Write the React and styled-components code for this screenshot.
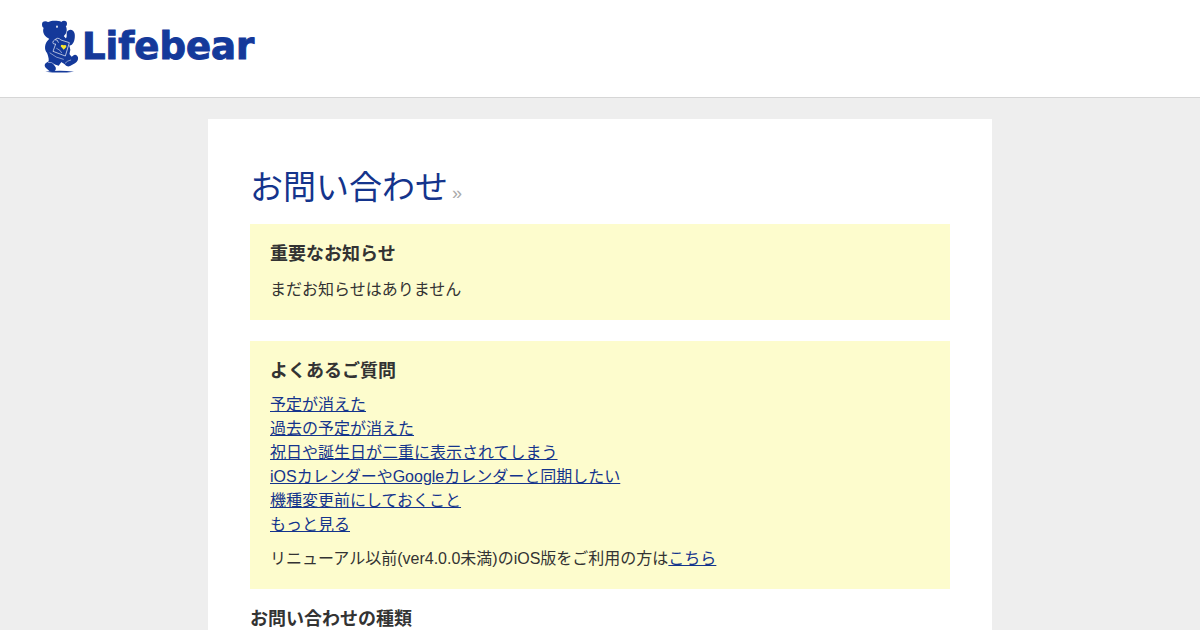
import React from "react";
import styled, { createGlobalStyle } from "styled-components";

const GlobalStyle = createGlobalStyle`
  * { box-sizing: border-box; }
  body {
    margin: 0;
    background: #eee;
    color: #333;
    font-family: "Liberation Sans", "Noto Sans CJK JP", sans-serif;
    font-size: 16px;
    line-height: 24px;
  }
`;

const Header = styled.header`
  padding: 20px 42px 23px;
  background: #fff;
  border-bottom: 1px solid #d6d6d6;
`;

const LogoLink = styled.a`
  display: inline-flex;
  align-items: center;
  gap: 2px;
  height: 54px;
  color: #14399a;
  text-decoration: none;
  vertical-align: top;
`;

const Wordmark = styled.span`
  font-family: "DejaVu Sans", sans-serif;
  font-size: 37px;
  font-weight: 700;
  line-height: 54px;
  -webkit-text-stroke: 1px currentColor;
`;

const Main = styled.main`
  max-width: 784px;
  margin: 21px auto;
  padding: 42px;
  background: #fff;
`;

const PageTitle = styled.h1`
  margin: 0 0 10px;
  color: #14348c;
  font-size: 33px;
  font-weight: 400;
  line-height: 53px;
`;

const TitleMark = styled.span`
  margin-left: 4px;
  color: #aaa;
  font-size: 18px;
  line-height: 18px;
`;

const Notice = styled.section`
  margin-bottom: 21px;
  padding: 18px 20px;
  background: #fdfccd;
`;

const FaqNotice = styled(Notice)`
  margin-bottom: 18px;
`;

const Heading = styled.h2`
  margin: 0;
  font-size: 18px;
  font-weight: 700;
  line-height: 24px;
`;

const Paragraph = styled.p`
  margin: ${({ $gap = 10 }) => $gap}px 0 0;
`;

const LinkList = styled.ul`
  margin: 10px 0 0;
  padding: 0;
  list-style: none;
`;

const TextLink = styled.a`
  color: #14348c;
  text-decoration: underline;
`;

const faqs = [
  "予定が消えた",
  "過去の予定が消えた",
  "祝日や誕生日が二重に表示されてしまう",
  "iOSカレンダーやGoogleカレンダーと同期したい",
  "機種変更前にしておくこと",
  "もっと見る",
];

function Bear() {
  return (
    <svg width="38" height="54" viewBox="18 18 114 162" aria-hidden="true">
      <g fill="#14399a">
        <circle cx="28" cy="32" r="10" />
        <circle cx="84" cy="29" r="9" />
        <path d="M25 37C31 21 50 18 67 21C81 23 91 33 92 45C93 57 87 64 79 70C68 80 43 80 32 70C20 60 19 48 25 37Z" />
        <path d="M92 56C97 43 113 45 116 59C118 73 114 89 104 94C93 97 82 88 77 74C86 79 91 75 92 67Z" />
        <path d="M44 62L80 62L97 82L103 107L98 133L69 145L39 134L32 113L36 88Z" />
        <path d="M48 70C31 78 25 94 28 108C32 121 47 123 62 128L72 111L52 99L61 78Z" />
        <path d="M38 119L80 139L68 155L52 150L59 160Q62 172 50 173L41 172L29 161Q22 152 31 146L38 142Z" />
        <path d="M76 113L95 115L107 128L114 123Q123 120 126 130Q128 141 117 148L102 156Q92 160 85 150L67 139Z" />
        <path d="M28 173Q71 168 114 173Q71 178 28 173Z" />
      </g>
      <g fill="none" stroke="#fff" strokeWidth="2" strokeLinejoin="round" strokeLinecap="round">
        <path d="M58 76Q65 68 75 78L100 86L88 126L51 112L59 90Q47 91 52 81Q55 75 63 78L67 85" />
        <path d="M42 117Q59 132 82 136M37 145Q47 143 55 151M88 147Q94 140 104 138" strokeWidth="1.5" />
        <path d="M62 103Q74 108 77 116" strokeWidth="1.5" />
      </g>
      <ellipse cx="63" cy="38" rx="2.5" ry="3.5" fill="#fff" />
      <path d="M83 107L74 97Q75 90 83 94Q92 91 91 99Z" fill="#f8e52d" />
    </svg>
  );
}

export default function App() {
  return (
    <>
      <GlobalStyle />
      <Header>
        <LogoLink href="/">
          <Bear />
          <Wordmark>Lifebear</Wordmark>
        </LogoLink>
      </Header>
      <Main>
        <PageTitle>
          お問い合わせ<TitleMark>»</TitleMark>
        </PageTitle>
        <Notice>
          <Heading>重要なお知らせ</Heading>
          <Paragraph $gap={12}>まだお知らせはありません</Paragraph>
        </Notice>
        <FaqNotice>
          <Heading>よくあるご質問</Heading>
          <LinkList>
            {faqs.map((faq) => (
              <li key={faq}>
                <TextLink href="#faq">{faq}</TextLink>
              </li>
            ))}
          </LinkList>
          <Paragraph>
            リニューアル以前(ver4.0.0未満)のiOS版をご利用の方は
            <TextLink href="#legacy">こちら</TextLink>
          </Paragraph>
        </FaqNotice>
        <Heading>お問い合わせの種類</Heading>
      </Main>
    </>
  );
}
